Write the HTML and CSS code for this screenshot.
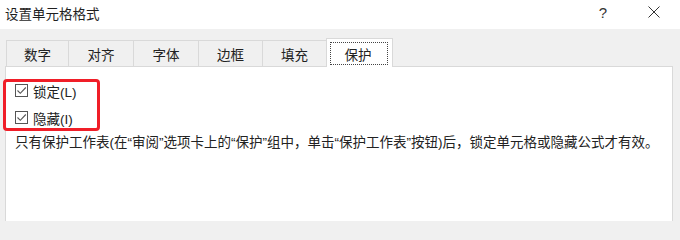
FILE: index.html
```html
<!DOCTYPE html>
<html lang="zh-CN">
<head>
<meta charset="utf-8">
<title>设置单元格格式</title>
<link rel="stylesheet" href="styles.css">
</head>
<body>
<div class="window">
  <div class="titlebar">
    <span class="title">设置单元格格式</span>
    <span class="help">?</span>
    <svg class="close" width="12" height="12" viewBox="0 0 12 12"><path d="M0.5 0.5L11.5 11.5M11.5 0.5L0.5 11.5" stroke="#333" stroke-width="1" fill="none"/></svg>
  </div>
  <div class="tabs">
    <div class="tab t1">数字</div>
    <div class="tab t2">对齐</div>
    <div class="tab t3">字体</div>
    <div class="tab t4">边框</div>
    <div class="tab t5">填充</div>
    <div class="tab selected"><span class="focus">保护</span></div>
  </div>
  <div class="panel">
    <div class="highlight"></div>
    <label class="row"><span class="box"><svg width="11" height="11" viewBox="0 0 11 11"><path d="M1.5 5.5L4.3 8.3L9.8 2.5" stroke="#555" stroke-width="1.1" fill="none"/></svg></span><span class="label">锁定(L)</span></label>
    <label class="row"><span class="box"><svg width="11" height="11" viewBox="0 0 11 11"><path d="M1.5 5.5L4.3 8.3L9.8 2.5" stroke="#555" stroke-width="1.1" fill="none"/></svg></span><span class="label">隐藏(I)</span></label>
    <p class="desc">只有保护工作表(在“审阅”选项卡上的“保护”组中，单击“保护工作表”按钮)后，锁定单元格或隐藏公式才有效。</p>
  </div>
</div>
</body>
</html>
```
FILE: styles.css
```css
html, body {
  margin: 0;
  padding: 0;
  background: #f0f0f0;
  overflow: hidden;
}
body {
  width: 680px;
  height: 221px;
  font-family: "Liberation Sans", "Noto Sans CJK SC", sans-serif;
  color: #1f1f1f;
}
.titlebar {
  height: 29px;
  background: #ffffff;
  display: flex;
  align-items: center;
  padding-left: 5px;
  box-sizing: border-box;
}
.title {
  font-size: 13.5px;
  flex: 1;
  margin-top: -4px;
}
.help {
  font-size: 15px;
  color: #333;
  margin-right: 41px;
  margin-top: -5px;
}
.close {
  margin-right: 20px;
  margin-top: -5px;
}
.tabs {
  display: flex;
  align-items: flex-start;
  margin: 9px 0 -1px 6px;
  height: 29px;
}
.tab {
  box-sizing: border-box;
  height: 26px;
  margin-top: 2px;
  border-top: 1px solid #d9d9d9;
  border-left: 1px solid #d9d9d9;
  display: flex;
  align-items: center;
  justify-content: center;
  font-size: 13.5px;
  color: #222;
  background: #f0f0f0;
}
.t1 { width: 62px; }
.t2 { width: 65px; }
.t3 { width: 65px; }
.t4 { width: 64px; }
.t5 { width: 64px; }
.selected {
  width: 67px;
  height: 29px;
  margin-top: 0;
  background: #ffffff;
  border-right: 1px solid #d9d9d9;
  position: relative;
  z-index: 1;
  padding: 3px 4px 2px 3px;
}
.focus {
  flex: 1;
  align-self: stretch;
  border: 1px dotted #444;
  display: flex;
  align-items: center;
  justify-content: center;
  padding-right: 2px;
}
.panel {
  position: relative;
  margin: 0 7px 0 5px;
  background: #ffffff;
  border: 1px solid #d9d9d9;
  border-bottom: none;
  height: 155px;
  padding: 10px 0 0 9px;
  box-sizing: border-box;
}
.highlight {
  position: absolute;
  left: -3px;
  top: 12px;
  width: 97px;
  height: 52px;
  box-sizing: border-box;
  border: 3px solid #f01e28;
  border-radius: 4px;
}
.row {
  display: flex;
  align-items: center;
  height: 27px;
}
.box {
  width: 13px;
  height: 13px;
  box-sizing: border-box;
  border: 1px solid #555;
  display: flex;
  align-items: center;
  justify-content: center;
  background: #fff;
}
.label {
  margin-left: 5px;
  font-size: 13.5px;
  color: #222;
}
.desc {
  margin: 3px 0 0 0;
  font-size: 13.5px;
  line-height: 18px;
  color: #222;
  white-space: nowrap;
}
```
